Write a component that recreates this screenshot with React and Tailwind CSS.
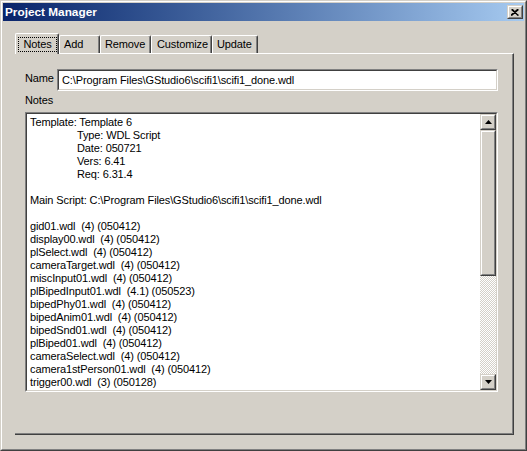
import React from "react";

const lines = [
  "gid01.wdl  (4) (050412)",
  "display00.wdl  (4) (050412)",
  "plSelect.wdl  (4) (050412)",
  "cameraTarget.wdl  (4) (050412)",
  "miscInput01.wdl  (4) (050412)",
  "plBipedInput01.wdl  (4.1) (050523)",
  "bipedPhy01.wdl  (4) (050412)",
  "bipedAnim01.wdl  (4) (050412)",
  "bipedSnd01.wdl  (4) (050412)",
  "plBiped01.wdl  (4) (050412)",
  "cameraSelect.wdl  (4) (050412)",
  "camera1stPerson01.wdl  (4) (050412)",
  "trigger00.wdl  (3) (050128)",
];

function Raised({ className = "", children }) {
  return (
    <div className={"border border-[#d4d0c8] border-r-[#404040] border-b-[#404040] bg-[#d4d0c8] " + className}>
      <div className="w-full h-full border border-white border-r-[#808080] border-b-[#808080] flex items-center justify-center">
        {children}
      </div>
    </div>
  );
}

function Arrow({ down }) {
  return (
    <svg width="7" height="4" viewBox="0 0 7 4">
      {down ? <path d="M0 0h7L3.5 4z" fill="#000" /> : <path d="M3.5 0L7 4H0z" fill="#000" />}
    </svg>
  );
}

export default function App() {
  const tabs = [
    { label: "Add", w: "w-[41px]", pl: "pl-[4px]" },
    { label: "Remove", w: "w-[51px]", pl: "pl-[4px]" },
    { label: "Customize", w: "w-[61px]", pl: "pl-[5px]" },
    { label: "Update", w: "w-[46px]", pl: "pl-[4px]" },
  ];

  return (
    <div className="w-[527px] h-[451px] bg-[#d4d0c8] border border-[#d4d0c8] border-r-[#404040] border-b-[#404040] font-['Liberation_Sans',Arial,sans-serif] text-[11px] leading-[13px] tracking-[-0.12px] text-black">
      <div className="h-full border border-white border-r-[#808080] border-b-[#808080] p-[1px]">
        {/* title bar */}
        <div className="h-[18px] flex items-center justify-between pl-[2px] pr-[1px] bg-linear-to-r from-[#0a246a] to-[#a6caf0]">
          <span className="text-white font-bold text-[11.8px] tracking-normal">Project Manager</span>
          <Raised className="w-[16px] h-[14px]">
            <svg width="8" height="7" viewBox="0 0 8 7">
              <path d="M0.5 0.5L7.5 6.5M1.5 0.5L7 6.5M6.5 0.5L-0.5 6.5M7.5 0.5L0.5 6.5" stroke="#000" strokeWidth="1.2" />
            </svg>
          </Raised>
        </div>

        <div className="pl-[12px] pt-[12px]">
          {/* tabs */}
          <div className="flex h-[20px] items-start">
            <div className="relative z-10 w-[44px] h-[21px] bg-[#d4d0c8] border-t border-l border-white border-r border-r-[#404040] rounded-tl-[2px] rounded-tr-[2px] shadow-[inset_-1px_0_#808080] pt-[3px] pl-[2px]">
              <div className="w-[39px] h-[15px] border border-dotted border-black flex items-center justify-center">
                Notes
              </div>
            </div>
            {tabs.map((t) => (
              <div
                key={t.label}
                className={"mt-[2px] h-[18px] border-t border-l border-white border-r border-r-[#404040] rounded-tl-[2px] rounded-tr-[2px] shadow-[inset_-1px_0_#808080] pt-[2px] " + t.w + " " + t.pl}
              >
                {t.label}
              </div>
            ))}
          </div>

          {/* panel */}
          <div className="w-[499px] h-[382px] border-t border-white border-r border-b border-r-[#404040] border-b-[#404040]">
            <div className="h-full border-r border-b border-[#808080] pl-[10px] pt-[15px]">
              <div className="flex items-start">
                <span className="w-[32px] mt-[3px]">Name</span>
                <div className="w-[441px] h-[22px] border border-[#808080] border-r-white border-b-white">
                  <div className="h-full border border-[#404040] border-r-[#d4d0c8] border-b-[#d4d0c8] bg-white flex items-center pl-[3px]">
                    C:\Program Files\GStudio6\scifi1\scifi1_done.wdl
                  </div>
                </div>
              </div>
              <div className="mt-[3px]">Notes</div>
              <div className="mt-[5px] w-[473px] h-[280px] border border-[#808080] border-r-white border-b-white">
                <div className="h-full border border-[#404040] border-r-[#d4d0c8] border-b-[#d4d0c8] bg-white flex">
                  <div className="flex-1 pl-[3px] pt-[2px] whitespace-pre overflow-hidden">
                    <div>Template: Template 6</div>
                    <div className="pl-[47px]">Type: WDL Script</div>
                    <div className="pl-[47px]">Date: 050721</div>
                    <div className="pl-[47px]">Vers: 6.41</div>
                    <div className="pl-[47px]">Req: 6.31.4</div>
                    <div>&nbsp;</div>
                    <div>Main Script: C:\Program Files\GStudio6\scifi1\scifi1_done.wdl</div>
                    <div>&nbsp;</div>
                    {lines.map((l) => (
                      <div key={l}>{l}</div>
                    ))}
                  </div>
                  <div className="w-[16px] flex flex-col">
                    <Raised className="w-[16px] h-[16px]">
                      <Arrow />
                    </Raised>
                    <Raised className="w-[16px] h-[146px]" />
                    <div className="flex-1 bg-[image:repeating-conic-gradient(#d4d0c8_0_25%,#ffffff_0_50%)] bg-[length:2px_2px]" />
                    <Raised className="w-[16px] h-[16px]">
                      <Arrow down />
                    </Raised>
                  </div>
                </div>
              </div>
            </div>
          </div>
        </div>
      </div>
    </div>
  );
}
